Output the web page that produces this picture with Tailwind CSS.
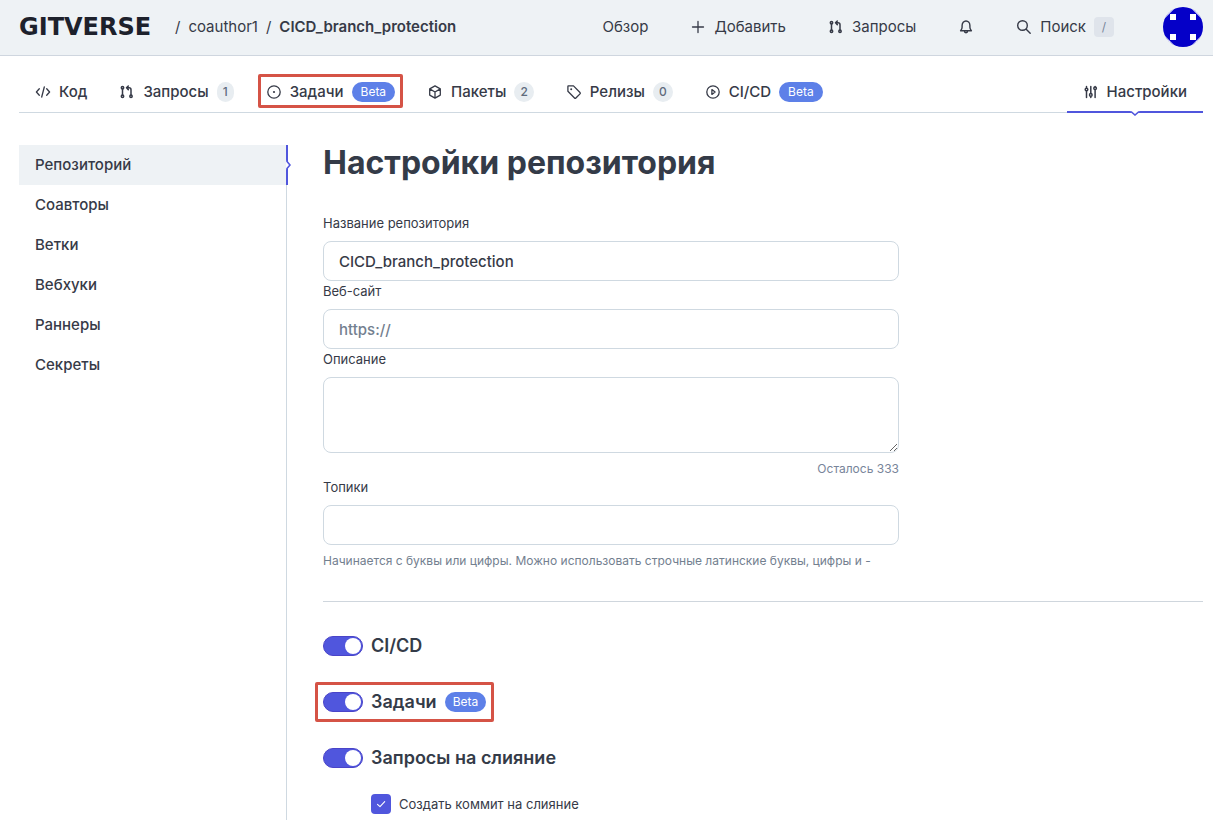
<!DOCTYPE html>
<html lang="ru">
<head>
<meta charset="utf-8">
<meta name="viewport" content="width=device-width, initial-scale=1">
<title>Настройки репозитория</title>
<script src="https://cdn.jsdelivr.net/npm/@tailwindcss/browser@4"></script>
</head>
<body class="flex h-screen flex-col overflow-hidden bg-white font-['Inter',sans-serif] text-[15px] leading-5 text-[#363a47]">

<svg class="hidden" aria-hidden="true">
  <symbol id="pr" viewBox="0 0 16 16"><g fill="none" stroke="currentColor" stroke-width="1.5" stroke-linecap="round" stroke-linejoin="round"><circle cx="3.500" cy="3.700" r="1.200"/><circle cx="3.500" cy="12.300" r="1.200"/><circle cx="12" cy="12.300" r="1.200"/><path d="M3.500 5v6M12 11V5.700a2 2 0 0 0-2-2H7.800M9.300 2 7.500 3.800l1.800 1.800"/></g></symbol>
</svg>

<header class="flex h-14 shrink-0 items-center border-b border-[#cfd6df] bg-[#eef2f5] pr-2.5 pb-0.5 pl-[19px]">
  <nav class="flex items-center gap-2" aria-label="Путь">
    <a href="#" class="w-[148px] font-['DejaVu_Sans',sans-serif] text-2xl leading-5 font-bold text-[#1d212c]">GITVERSE</a>
    <span>/</span>
    <a href="#">coauthor1</a>
    <span>/</span>
    <a href="#" class="font-semibold">CICD_branch_protection</a>
  </nav>
  <nav class="ml-auto flex items-center gap-[42px]" aria-label="Главное меню">
    <a href="#">Обзор</a>
    <button class="flex items-center gap-2">
      <svg class="size-4" viewBox="0 0 16 16" fill="none" stroke="currentColor" stroke-width="1.3" stroke-linecap="round"><path d="M8 2.500v11M2.500 8h11"/></svg>Добавить</button>
    <a href="#" class="flex items-center gap-2"><svg class="size-4"><use href="#pr"/></svg>Запросы</a>
    <button aria-label="Уведомления">
      <svg class="size-4" viewBox="0 0 16 16" fill="none" stroke="currentColor" stroke-width="1.4" stroke-linecap="round" stroke-linejoin="round"><path d="M2.600 11.700h10.800c-1-1-1.500-2-1.500-3.500V6.400C11.900 4 10.200 2 8 2S4.100 4 4.100 6.400v1.800c0 1.500-.5 2.500-1.500 3.500ZM6.400 12c0 1 .7 1.700 1.600 1.700s1.600-.7 1.600-1.700"/></svg></button>
    <button class="flex items-center gap-2">
      <svg class="size-4" viewBox="0 0 16 16" fill="none" stroke="currentColor" stroke-width="1.4" stroke-linecap="round"><circle cx="6.500" cy="6.500" r="4.800"/><path d="m10.200 10.200 4 4"/></svg>Поиск<kbd class="flex size-5 items-center justify-center rounded bg-[#dfe4eb] font-['Inter',sans-serif] text-xs text-[#78859a]">/</kbd></button>
    <button class="ml-[7px]" aria-label="Профиль">
      <svg class="size-10 overflow-hidden rounded-full" viewBox="0 0 40 40"><path fill="#0500c8" d="M0 0h40v40H0z"/><path fill="#fff" d="M7 7h6v6H7zM27 7h6v6h-6zM7 27h6v6H7zM27 27h6v6h-6zM0 0h13L0 13zM27 0h13v13zM0 27l13 13H0zM40 27v13H27z"/></svg></button>
  </nav>
</header>

<nav class="mt-4 mr-2.5 ml-[19px] flex h-[41px] shrink-0 items-stretch border-b border-[#cfd9e1] font-medium" aria-label="Разделы репозитория">
  <a href="#" class="flex items-center gap-2 px-4">
    <svg class="size-4" viewBox="0 0 16 16" fill="none" stroke="currentColor" stroke-width="1.300" stroke-linecap="round" stroke-linejoin="round"><path d="M4.300 4.800 1.400 8l2.900 3.200M11.700 4.800 14.600 8l-2.900 3.200M9.300 3 6.700 13"/></svg>Код</a>
  <a href="#" class="flex items-center gap-2 px-4"><svg class="size-4"><use href="#pr"/></svg>Запросы<span class="rounded-full bg-[#e8edf1] px-1.5 text-xs leading-5 text-[#5f6b7d]">1</span></a>
  <a href="#" class="relative flex items-center gap-2 px-4">
    <span class="absolute inset-x-2 top-0.5 bottom-1 rounded-xs border-3 border-[#d55346]"></span>
    <svg class="size-4" viewBox="0 0 16 16" fill="none" stroke="currentColor" stroke-width="1.300"><circle cx="8" cy="8" r="6.200"/><circle cx="8" cy="8" r="1.100" fill="currentColor" stroke="none"/></svg>Задачи<span class="rounded-full bg-[#5d80e8] px-[9px] text-xs leading-5 font-normal text-white">Beta</span></a>
  <a href="#" class="flex items-center gap-2 px-4">
    <svg class="size-4" viewBox="0 0 16 16" fill="none" stroke="currentColor" stroke-width="1.300" stroke-linejoin="round"><path d="m8 1.900 5.300 3v6.200l-5.300 3-5.300-3V4.900zM2.700 4.900 8 8l5.300-3.100M8 8v6"/></svg>Пакеты<span class="rounded-full bg-[#e8edf1] px-1.5 text-xs leading-5 text-[#5f6b7d]">2</span></a>
  <a href="#" class="flex items-center gap-2 px-4">
    <svg class="size-4" viewBox="0 0 16 16" fill="none" stroke="currentColor" stroke-width="1.300" stroke-linejoin="round"><path d="M2.300 1.900h5.200L14 8.500a1 1 0 0 1 0 1.400L9.900 14a1 1 0 0 1-1.400 0L1.900 7.300V2.400c0-.3.200-.5.400-.5Z"/><circle cx="5.200" cy="5.200" r="1" fill="currentColor" stroke="none"/></svg>Релизы<span class="rounded-full bg-[#e8edf1] px-1.5 text-xs leading-5 text-[#5f6b7d]">0</span></a>
  <a href="#" class="flex items-center gap-2 px-4">
    <svg class="size-4" viewBox="0 0 16 16" fill="none" stroke="currentColor" stroke-width="1.300" stroke-linejoin="round"><circle cx="8" cy="8" r="6.200"/><path d="m6.900 5.600 3.200 2.400-3.200 2.400z"/></svg>CI/CD<span class="rounded-full bg-[#5d80e8] px-[9px] text-xs leading-5 font-normal text-white">Beta</span></a>
  <a href="#" aria-current="page" class="relative ml-auto flex items-center gap-2 px-4">
    <svg class="size-4" viewBox="0 0 16 16" fill="none" stroke="currentColor" stroke-width="1.500" stroke-linecap="round"><path d="M3.500 2.500v1M3.500 7v6.500M7.800 2.500v6.700M7.800 12.700v.8M12.100 2.500v.3M12.100 6v7.500"/><circle cx="3.500" cy="5.500" r="1.300"/><circle cx="7.800" cy="10.900" r="1.300"/><circle cx="12.100" cy="4.300" r="1.300"/></svg>Настройки
    <span class="absolute inset-x-0 -bottom-px h-0.5 bg-[#5056dd]"></span>
    <svg class="absolute -bottom-1 left-1/2 h-[5px] w-2.5 -translate-x-1/2" viewBox="0 0 10 5"><path d="M0 0h10L5 4.500z" fill="#fff"/><path d="M0 1h1.500L5 4l3.500-3H10" fill="none" stroke="#5056dd" stroke-width="1.600"/></svg></a>
</nav>

<div class="mt-8 mr-2.5 ml-[19px] flex min-h-0 flex-1">
  <aside class="w-[268px] shrink-0 border-r border-[#cfd9e1] font-medium">
    <nav class="flex flex-col" aria-label="Настройки">
      <a href="#" aria-current="page" class="relative bg-[#eef2f5] px-4 py-2.5">Репозиторий
        <span class="absolute inset-y-0 -right-0.5 w-0.5 bg-[#5056dd]"></span>
        <svg class="absolute top-1/2 -right-[5px] h-2.5 w-[5px] -translate-y-1/2" viewBox="0 0 5 10"><path d="M0 0v10l4.500-5z" fill="#fff"/><path d="M1 0v1.500L4 5 1 8.500V10" fill="none" stroke="#5056dd" stroke-width="1.600"/></svg></a>
      <a href="#" class="px-4 py-2.5">Соавторы</a>
      <a href="#" class="px-4 py-2.5">Ветки</a>
      <a href="#" class="px-4 py-2.5">Вебхуки</a>
      <a href="#" class="px-4 py-2.5">Раннеры</a>
      <a href="#" class="px-4 py-2.5">Секреты</a>
    </nav>
  </aside>

  <main class="min-w-0 flex-1 pl-9">
    <h1 class="mb-8 text-[32px] leading-9 font-bold text-[#343b48]">Настройки репозитория</h1>
    <form class="flex max-w-[576px] flex-col text-[13px]">
      <label for="name" class="mb-2">Название репозитория</label>
      <input id="name" type="text" value="CICD_branch_protection" class="h-10 rounded-lg border border-[#cfd9e1] px-[15px] text-[15px] font-medium">
      <label for="site" class="mb-2">Веб-сайт</label>
      <input id="site" type="url" placeholder="https://" class="h-10 rounded-lg border border-[#cfd9e1] px-[15px] text-[15px] font-medium placeholder:text-[#73808f]">
      <label for="about" class="mb-2">Описание</label>
      <textarea id="about" maxlength="333" class="h-[76px] rounded-lg border border-[#cfd9e1] px-[15px] py-2 text-[15px] font-medium"></textarea>
      <p class="mt-2 text-right text-xs text-[#78859a]">Осталось 333</p>
      <label for="topics" class="mb-2">Топики</label>
      <input id="topics" type="text" class="h-10 rounded-lg border border-[#cfd9e1] px-[15px] text-[15px] font-medium">
      <p class="mt-2 text-xs text-[#73808f]">Начинается с буквы или цифры. Можно использовать строчные латинские буквы, цифры и -</p>
    </form>
    <hr class="my-8 border-[#cfd6dd]">
    <div class="flex flex-col items-start gap-8 text-lg leading-6 font-semibold text-[#343b48]">
      <label class="flex items-center gap-2">
        <input type="checkbox" role="switch" checked class="h-5 w-10 appearance-none rounded-full border border-[#4a44c8] bg-[#5056dd] p-px before:ml-auto before:block before:size-4 before:rounded-full before:bg-white">CI/CD</label>
      <label class="relative flex items-center gap-2">
        <span class="absolute -inset-x-2 -inset-y-2 rounded-xs border-3 border-[#d55346]"></span>
        <input type="checkbox" role="switch" checked class="h-5 w-10 appearance-none rounded-full border border-[#4a44c8] bg-[#5056dd] p-px before:ml-auto before:block before:size-4 before:rounded-full before:bg-white">Задачи<span class="rounded-full bg-[#5d80e8] px-2 text-xs leading-5 font-normal text-white">Beta</span></label>
      <label class="flex items-center gap-2">
        <input type="checkbox" role="switch" checked class="h-5 w-10 appearance-none rounded-full border border-[#4a44c8] bg-[#5056dd] p-px before:ml-auto before:block before:size-4 before:rounded-full before:bg-white">Запросы на слияние</label>
    </div>
    <label class="mt-6 ml-12 flex items-center gap-2 text-[13px] leading-5">
      <span class="relative size-5">
        <input type="checkbox" checked class="block size-5 appearance-none rounded bg-[#5056dd]">
        <svg class="pointer-events-none absolute inset-0" viewBox="0 0 20 20" fill="none" stroke="#fff" stroke-width="1.100" stroke-linecap="round" stroke-linejoin="round"><path d="m6.500 10.300 2.500 2.400 4.700-5"/></svg>
      </span>Создать коммит на слияние</label>
  </main>
</div>
</body>
</html>
